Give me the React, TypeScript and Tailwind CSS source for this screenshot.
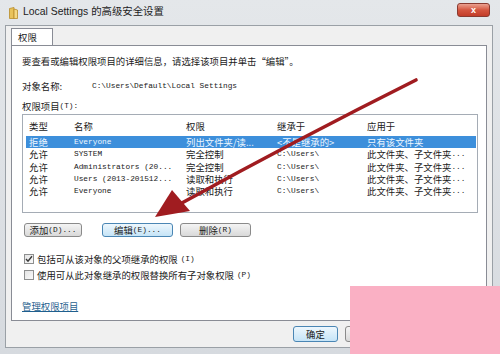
import React from 'react';

const cjk = "font-['Noto_Sans_CJK_SC',sans-serif] text-[9.4px] leading-[12px]";
const mono = "font-['Liberation_Mono','Noto_Sans_CJK_SC',monospace] text-[7.8px] leading-[12px]";
const cell = "whitespace-nowrap pl-[3px]";

type Row = { type: string; name: string; perm: string; from: string; apply: string; selected?: boolean };

const rows: Row[] = [
  { type: '拒绝', name: 'Everyone', perm: '列出文件夹/读...', from: '<不是继承的>', apply: '只有该文件夹', selected: true },
  { type: '允许', name: 'SYSTEM', perm: '完全控制', from: 'C:\\Users\\', apply: '此文件夹、子文件夹...' },
  { type: '允许', name: 'Administrators (20...', perm: '完全控制', from: 'C:\\Users\\', apply: '此文件夹、子文件夹...' },
  { type: '允许', name: 'Users (2013-201512...', perm: '读取和执行', from: 'C:\\Users\\', apply: '此文件夹、子文件夹...' },
  { type: '允许', name: 'Everyone', perm: '读取和执行', from: 'C:\\Users\\', apply: '此文件夹、子文件夹...' },
];

const Btn = ({ label, hot, className = '', children }: { label?: string; hot?: boolean; className?: string; children?: React.ReactNode }) => (
  <div
    className={`flex items-center justify-center rounded-[3px] border ${
      hot
        ? 'border-[#4a86b4] bg-gradient-to-b from-[#eef7fd] to-[#c5e4f7]'
        : 'border-[#8a8a8a] bg-gradient-to-b from-[#f4f4f4] to-[#d9d9d9]'
    } text-[#1a1a1a] ${className}`}
  >
    {children ?? <span className={cjk}>{label}</span>}
  </div>
);

const CheckBox = ({ checked }: { checked?: boolean }) => (
  <div className="flex h-[10px] w-[10px] items-center justify-center border border-[#8e8f8f] bg-gradient-to-br from-[#e4e4e4] to-[#fafafa]">
    {checked && (
      <svg width="8" height="8" viewBox="0 0 8 8">
        <path d="M1 4 L3 6.2 L7 1.2" fill="none" stroke="#3a3a3a" strokeWidth="1.4" />
      </svg>
    )}
  </div>
);

export default function App() {
  return (
    <div className="relative flex h-[354px] w-[500px] flex-col overflow-hidden bg-gradient-to-b from-[#e4e7ea] to-[#d6dadf] text-[#1a1a1a]">
      {/* Title bar */}
      <div className="flex h-[25px] shrink-0 items-start">
        <svg className="ml-[9px] mt-[7px]" width="9" height="12" viewBox="0 0 9 12">
          <path d="M0.5 1.5 L5 0.5 L5 11.5 L0.5 11.5 Z" fill="#e9c35a" stroke="#b78c2a" strokeWidth="0.8" />
          <path d="M5 2 L8.5 3 L8.5 11.5 L5 11.5 Z" fill="#f5d982" stroke="#b78c2a" strokeWidth="0.8" />
        </svg>
        <span className="ml-[5px] mt-[7px] font-['Liberation_Sans','Noto_Sans_CJK_SC',sans-serif] text-[10.4px] leading-none text-[#222]">
          Local Settings 的高级安全设置
        </span>
        <div className="ml-auto mr-[10px] mt-[3px] flex h-[14px] w-[33px] items-center justify-center rounded-[3px] border border-[#8a3a30] bg-gradient-to-b from-[#eaa090] via-[#d4553f] to-[#c23c28]">
          <span className="font-['Liberation_Sans',sans-serif] text-[9px] font-bold leading-none text-white">x</span>
        </div>
      </div>

      {/* Client area */}
      <div className="ml-[5px] mr-[7px] flex h-[323px] shrink-0 flex-col border border-[#9aa0a6] bg-[#f0f0f0]">
        {/* Tab */}
        <div className="ml-[5px] mt-[2px] flex h-[17px] w-[42px] items-center border border-b-0 border-[#898c95] bg-white pl-[6px]">
          <span className={cjk}>权限</span>
        </div>

        {/* Tab panel */}
        <div className="mx-[5px] flex h-[276px] flex-col border border-[#898c95] bg-white pl-[10px]">
          <div className={`mt-[9px] flex h-[12px] items-center ${cjk}`}>
            要查看或编辑权限项目的详细信息，请选择该项目并单击“编辑”。
          </div>

          <div className="mt-[13px] flex h-[12px] items-center">
            <span className={`w-[70px] ${cjk}`}>对象名称:</span>
            <span className={mono}>C:\Users\Default\Local Settings</span>
          </div>

          <div className="mt-[8px] flex h-[12px] items-center">
            <span className={cjk}>权限项目</span>
            <span className={mono}>(T):</span>
          </div>

          {/* List view */}
          <div className="mt-[2px] flex h-[99px] w-[456px] flex-col border border-[#a5acb5] bg-white">
            <div className="ml-[3px] mr-[1px] grid h-[21px] grid-cols-[45px_112px_91px_90px_1fr] items-center">
              {['类型', '名称', '权限', '继承于', '应用于'].map((h) => (
                <span key={h} className={`${cell} ${cjk}`}>
                  {h}
                </span>
              ))}
            </div>
            {rows.map((r, i) => {
              const col = r.selected ? 'text-[#eef7ff]' : 'text-[#1a1a1a]';
              const dots = r.apply.endsWith('...');
              return (
                <div
                  key={i}
                  className={`ml-[3px] mr-[1px] grid h-[12.3px] grid-cols-[45px_112px_91px_90px_1fr] items-center ${
                    r.selected ? 'bg-[#3d8fdb]' : ''
                  } ${col}`}
                >
                  <span className={`${cell} ${cjk}`}>{r.type}</span>
                  <span className={`${cell} whitespace-pre ${mono}`}>{r.name}</span>
                  <span className={`${cell} ${cjk}`}>{r.perm}</span>
                  <span className={`${cell} ${r.selected ? cjk : mono}`}>{r.from}</span>
                  <div className="flex items-center whitespace-nowrap pl-[3px]">
                    <span className={cjk}>{dots ? r.apply.slice(0, -3) : r.apply}</span>
                    {dots && <span className={mono}>...</span>}
                  </div>
                </div>
              );
            })}
          </div>

          {/* Buttons */}
          <div className="mt-[10px] flex h-[14px] items-stretch pl-[2px]">
            <Btn className="w-[58px]">
              <span className={cjk}>添加</span>
              <span className={mono}>(D)...</span>
            </Btn>
            <Btn hot className="ml-[20px] w-[71px]">
              <span className={cjk}>编辑</span>
              <span className={mono}> (E)...</span>
            </Btn>
            <Btn className="ml-[7px] w-[71px]">
              <span className={cjk}>删除</span>
              <span className={mono}> (R)</span>
            </Btn>
          </div>

          {/* Checkboxes */}
          <div className="mt-[16px] flex h-[12px] items-center gap-[3px] pl-[2px]">
            <CheckBox checked />
            <span className={cjk}>包括可从该对象的父项继承的权限</span>
            <span className={mono}>(I)</span>
          </div>
          <div className="mt-[4px] flex h-[12px] items-center gap-[3px] pl-[2px]">
            <CheckBox />
            <span className={cjk}>使用可从此对象继承的权限替换所有子对象权限</span>
            <span className={mono}>(P)</span>
          </div>

          <div className="mt-[19px] flex h-[12px] items-center">
            <span className={`underline text-[#1f5f8e] ${cjk}`}>管理权限项目</span>
          </div>
        </div>

        {/* Bottom buttons */}
        <div className="flex flex-1 items-center pl-[287px]">
          <Btn hot className="h-[16px] w-[45px]" label="确定" />
          <Btn className="ml-[7px] h-[16px] w-[45px]" label="取消" />
          <Btn className="ml-[7px] h-[16px] w-[45px]" label="应用" />
        </div>
      </div>

      {/* Red annotation arrow */}
      <svg className="pointer-events-none absolute left-0 top-0" width="500" height="354" viewBox="0 0 500 354">
        <path d="M416 80 Q300 138 180 204" fill="none" stroke="#a01c20" strokeWidth="3.6" strokeLinecap="round" />
        <path d="M155 217 L172 190 L190 211 Z" fill="#a01c20" />
      </svg>

      {/* Watermark block */}
      <div className="absolute left-[350px] top-[286px] h-[68px] w-[150px] bg-[#fab0c4]" />
    </div>
  );
}
